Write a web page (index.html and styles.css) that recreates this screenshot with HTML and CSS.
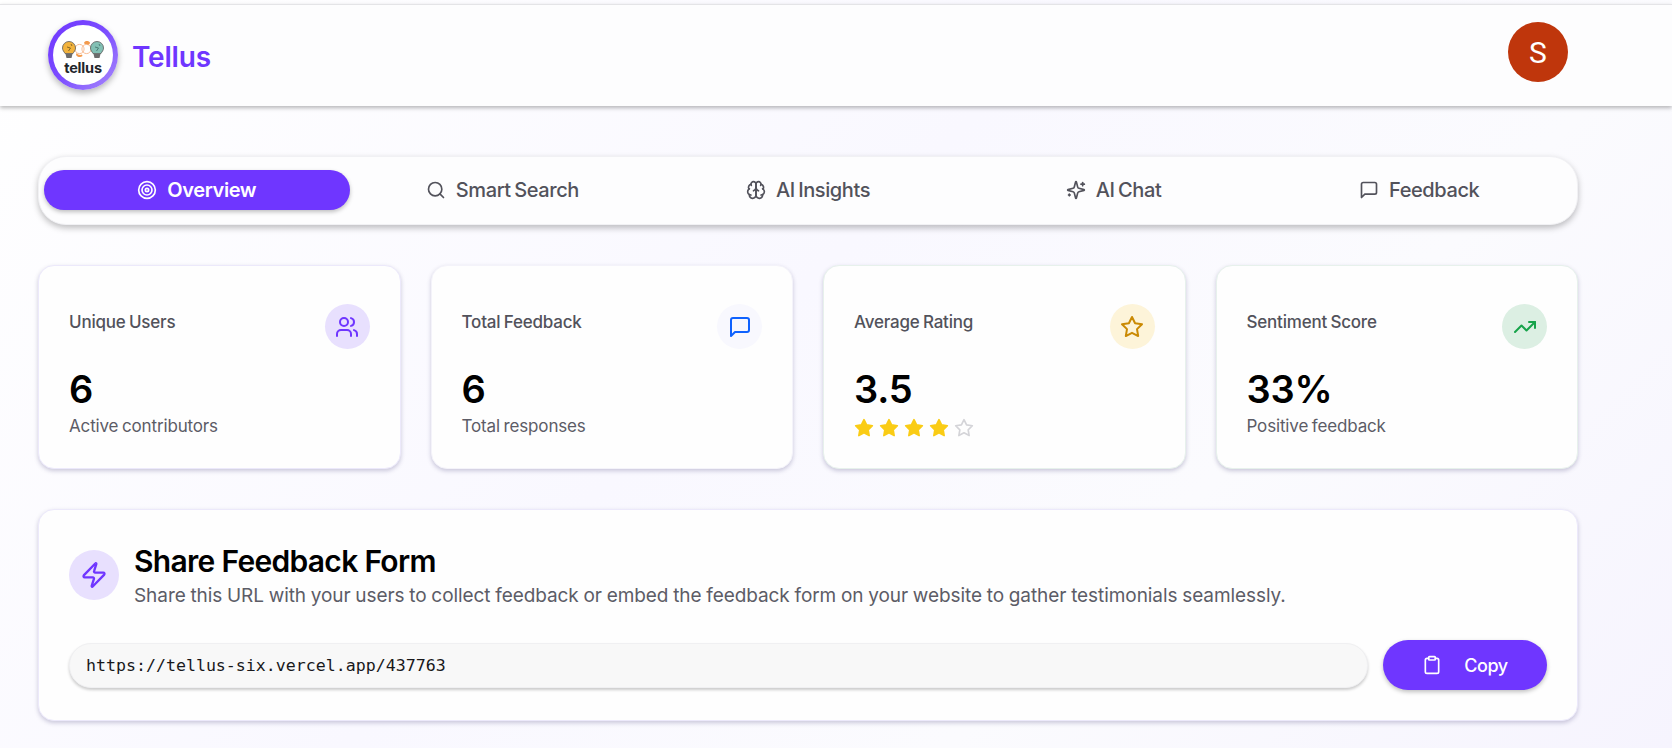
FILE: index.html
```html
<!DOCTYPE html>
<html lang="en">
<head>
<meta charset="utf-8">
<title>Tellus</title>
<link rel="stylesheet" href="styles.css">
</head>
<body>
<header class="topbar">
  <div class="brand">
    <div class="logo">
      <div class="logo-inner">
        <svg class="logo-art" viewBox="0 0 44 20" fill="none">
          <circle cx="18.5" cy="9" r="4.6" stroke="#f6b58a" stroke-width=".9"/>
          <circle cx="25.5" cy="9" r="4.6" stroke="#f6b58a" stroke-width=".9"/>
          <path d="M23 3c1-2.500 4-2.500 6-.5 0 1.500-1 2.500-2.500 2S23.500 4.500 23 3zM15.500 13c1.500 2 4 2.500 5.500 1.500l.5 1.500c-2 2-5.500 1-6.500-1z" fill="#f39a4c"/>
          <path d="M1.500 8a6.500 6.500 0 0 1 13 0c0 2.500-1.500 3.500-2.500 5.500H4C3 11.500 1.500 10.500 1.500 8z" fill="#f2b33d" stroke="#5a5a5a" stroke-width=".8"/>
          <path d="M4.500 14h7l-1 4h-5z" fill="#6c6c6c"/>
          <path d="M6 7l3.500 1-2 3M10 4l1 2" stroke="#6b5320" stroke-width=".8"/>
          <path d="M29.500 8a6.500 6.500 0 0 1 13 0c0 2.500-1.500 3.500-2.500 5.500h-8c-1-2-2.500-3-2.500-5.500z" fill="#82c0b4" stroke="#5a5a5a" stroke-width=".8"/>
          <path d="M32.500 14h7l-1 4h-5z" fill="#6c6c6c"/>
          <path d="M34 7l3.500 1-2 3M38 4l1 2" stroke="#3f6f67" stroke-width=".8"/>
        </svg>
        <span class="logo-word">tellus</span>
      </div>
    </div>
    <span class="brand-name">Tellus</span>
  </div>
  <div class="avatar">S</div>
</header>

<main class="page">
  <nav class="tabs">
    <a class="tab tab-active">
      <svg class="ico" viewBox="0 0 24 24"><circle cx="12" cy="12" r="10"/><circle cx="12" cy="12" r="6"/><circle cx="12" cy="12" r="2"/></svg>
      <span>Overview</span>
    </a>
    <a class="tab">
      <svg class="ico" viewBox="0 0 24 24"><circle cx="11" cy="11" r="8"/><path d="m21 21-4.300-4.300"/></svg>
      <span>Smart Search</span>
    </a>
    <a class="tab">
      <svg class="ico" viewBox="0 0 24 24"><path d="M12 5a3 3 0 1 0-5.997.125 4 4 0 0 0-2.526 5.770 4 4 0 0 0 .556 6.588A4 4 0 1 0 12 18Z"/><path d="M12 5a3 3 0 1 1 5.997.125 4 4 0 0 1 2.526 5.770 4 4 0 0 1-.556 6.588A4 4 0 1 1 12 18Z"/><path d="M15 13a4.500 4.500 0 0 1-3-4 4.500 4.500 0 0 1-3 4"/><path d="M17.599 6.500a3 3 0 0 0 .399-1.375"/><path d="M6.003 5.125A3 3 0 0 0 6.401 6.500"/><path d="M3.477 10.896a4 4 0 0 1 .585-.396"/><path d="M19.938 10.500a4 4 0 0 1 .585.396"/><path d="M6 18a4 4 0 0 1-1.967-.516"/><path d="M19.967 17.484A4 4 0 0 1 18 18"/></svg>
      <span>AI Insights</span>
    </a>
    <a class="tab">
      <svg class="ico" viewBox="0 0 24 24"><path d="M9.937 15.500A2 2 0 0 0 8.500 14.063l-6.135-1.582a.5.5 0 0 1 0-.962L8.500 9.936A2 2 0 0 0 9.937 8.500l1.582-6.135a.5.5 0 0 1 .963 0L14.063 8.500A2 2 0 0 0 15.500 9.937l6.135 1.581a.5.5 0 0 1 0 .964L15.500 14.063a2 2 0 0 0-1.437 1.437l-1.582 6.135a.5.5 0 0 1-.963 0z"/><path d="M20 3v4"/><path d="M22 5h-4"/><path d="M4 17v2"/><path d="M5 18H3"/></svg>
      <span>AI Chat</span>
    </a>
    <a class="tab">
      <svg class="ico" viewBox="0 0 24 24"><path d="M21 15a2 2 0 0 1-2 2H7l-4 4V5a2 2 0 0 1 2-2h14a2 2 0 0 1 2 2z"/></svg>
      <span>Feedback</span>
    </a>
  </nav>

  <section class="stats">
    <article class="card card-purple">
      <div class="card-head">
        <span class="card-title">Unique Users</span>
        <span class="badge badge-purple"><svg class="ico ico-badge" viewBox="0 0 24 24"><path d="M16 21v-2a4 4 0 0 0-4-4H6a4 4 0 0 0-4 4v2"/><circle cx="9" cy="7" r="4"/><path d="M22 21v-2a4 4 0 0 0-3-3.870"/><path d="M16 3.130a4 4 0 0 1 0 7.750"/></svg></span>
      </div>
      <div class="card-value">6</div>
      <div class="card-sub">Active contributors</div>
    </article>
    <article class="card card-blue">
      <div class="card-head">
        <span class="card-title">Total Feedback</span>
        <span class="badge badge-blue"><svg class="ico ico-badge" viewBox="0 0 24 24"><path d="M21 15a2 2 0 0 1-2 2H7l-4 4V5a2 2 0 0 1 2-2h14a2 2 0 0 1 2 2z"/></svg></span>
      </div>
      <div class="card-value">6</div>
      <div class="card-sub">Total responses</div>
    </article>
    <article class="card card-green">
      <div class="card-head">
        <span class="card-title">Average Rating</span>
        <span class="badge badge-amber"><svg class="ico ico-badge" viewBox="0 0 24 24"><polygon points="12 2 15.090 8.260 22 9.270 17 14.140 18.180 21.020 12 17.770 5.820 21.020 7 14.140 2 9.270 8.910 8.260 12 2"/></svg></span>
      </div>
      <div class="card-value">3.5</div>
      <div class="stars">
        <svg class="star star-on" viewBox="0 0 24 24"><polygon points="12 2 15.090 8.260 22 9.270 17 14.140 18.180 21.020 12 17.770 5.820 21.020 7 14.140 2 9.270 8.910 8.260 12 2"/></svg>
        <svg class="star star-on" viewBox="0 0 24 24"><polygon points="12 2 15.090 8.260 22 9.270 17 14.140 18.180 21.020 12 17.770 5.820 21.020 7 14.140 2 9.270 8.910 8.260 12 2"/></svg>
        <svg class="star star-on" viewBox="0 0 24 24"><polygon points="12 2 15.090 8.260 22 9.270 17 14.140 18.180 21.020 12 17.770 5.820 21.020 7 14.140 2 9.270 8.910 8.260 12 2"/></svg>
        <svg class="star star-on" viewBox="0 0 24 24"><polygon points="12 2 15.090 8.260 22 9.270 17 14.140 18.180 21.020 12 17.770 5.820 21.020 7 14.140 2 9.270 8.910 8.260 12 2"/></svg>
        <svg class="star star-off" viewBox="0 0 24 24"><polygon points="12 2 15.090 8.260 22 9.270 17 14.140 18.180 21.020 12 17.770 5.820 21.020 7 14.140 2 9.270 8.910 8.260 12 2"/></svg>
      </div>
    </article>
    <article class="card card-green">
      <div class="card-head">
        <span class="card-title">Sentiment Score</span>
        <span class="badge badge-green"><svg class="ico ico-badge" viewBox="0 0 24 24"><polyline points="22 7 13.500 15.500 8.500 10.500 2 17"/><polyline points="16 7 22 7 22 13"/></svg></span>
      </div>
      <div class="card-value">33%</div>
      <div class="card-sub">Positive feedback</div>
    </article>
  </section>

  <section class="share">
    <div class="share-head">
      <span class="share-badge"><svg class="ico ico-zap" viewBox="0 0 24 24"><path d="M4 14a1 1 0 0 1-.78-1.630l9.900-10.200a.5.5 0 0 1 .86.46l-1.920 6.020A1 1 0 0 0 13 10h7a1 1 0 0 1 .78 1.630l-9.900 10.200a.5.5 0 0 1-.86-.46l1.920-6.020A1 1 0 0 0 11 14z"/></svg></span>
      <div class="share-text">
        <h2 class="share-title">Share Feedback Form</h2>
        <p class="share-desc">Share this URL with your users to collect feedback or embed the feedback form on your website to gather testimonials seamlessly.</p>
      </div>
    </div>
    <div class="share-row">
      <div class="url-box">https://tellus-six.vercel.app/437763</div>
      <button class="copy-btn">
        <svg class="ico" viewBox="0 0 24 24"><rect x="8" y="2" width="8" height="4" rx="1"/><path d="M16 4h2a2 2 0 0 1 2 2v14a2 2 0 0 1-2 2H6a2 2 0 0 1-2-2V6a2 2 0 0 1 2-2h2"/></svg>
        <span>Copy</span>
      </button>
    </div>
  </section>
</main>
</body>
</html>
```

FILE: styles.css
```css
* { box-sizing: border-box; }
html, body { height: 100%; }
body {
  margin: 0;
  padding-top: 4px;
  overflow: hidden;
  font-family: "Inter", "Open Sans", sans-serif;
  color: #000;
  background: linear-gradient(135deg, #ffffff 0%, #f9f8ff 45%, #fbfbfe 70%, #f6f4fe 100%);
}
.ico {
  width: 20px;
  height: 20px;
  flex: none;
  fill: none;
  stroke: currentColor;
  stroke-width: 2;
  stroke-linecap: round;
  stroke-linejoin: round;
}

.topbar {
  height: 102px;
  padding: 0 104px 0 48px;
  display: flex;
  align-items: center;
  justify-content: space-between;
  border-top: 1px solid #e4e4e7;
  background: #fdfdfe;
  box-shadow: 0 2px 4px rgba(0, 0, 0, 0.28);
}
.brand { display: flex; align-items: center; gap: 14px; margin-bottom: 1px; }
.logo {
  width: 70px;
  height: 70px;
  padding: 5px;
  border-radius: 50%;
  background: linear-gradient(135deg, #6f36ff 0%, #7c4dff 50%, #a98bfb 100%);
  box-shadow: 0 3px 6px rgba(0, 0, 0, 0.28);
}
.logo-inner {
  width: 60px;
  height: 60px;
  border-radius: 50%;
  background: #fff;
  display: flex;
  flex-direction: column;
  align-items: center;
  justify-content: flex-start;
  padding-top: 15px;
}
.logo-art { width: 44px; height: 20px; flex: none; }
.logo-word {
  font-size: 14.5px;
  line-height: 15px;
  font-weight: 700;
  letter-spacing: -0.2px;
  color: #22262b;
}
.brand-name {
  margin-top: 3px;
  font-size: 28px;
  font-weight: 600;
  letter-spacing: -0.2px;
  color: #6f36ff;
}
.avatar {
  width: 60px;
  height: 60px;
  margin-bottom: 7px;
  border-radius: 50%;
  background: #bf360c;
  color: #fff;
  font-family: "Roboto", sans-serif;
  font-size: 30px;
  display: flex;
  align-items: center;
  justify-content: center;
}

.page { padding: 50px 94px 0 38px; }

.tabs {
  height: 69px;
  padding: 13px 5px 14px;
  display: grid;
  grid-template-columns: repeat(5, 1fr);
  border-radius: 28px;
  background: #fdfdfe;
  border: 1px solid #f1f1f4;
  box-shadow: 0 3px 6px rgba(0, 0, 0, 0.25);
}
.tab {
  display: flex;
  align-items: center;
  justify-content: center;
  gap: 10px;
  border-radius: 20px;
  font-size: 20px;
  font-weight: 500;
  letter-spacing: -0.4px;
  word-spacing: -1.5px;
  color: #52525b;
}
.tab-active {
  background: #6f36ff;
  color: #fff;
  font-weight: 600;
  box-shadow: 0 2px 4px rgba(0, 0, 0, 0.25);
}

.stats {
  margin-top: 40px;
  display: grid;
  grid-template-columns: repeat(4, 1fr);
  gap: 30px;
}
.card {
  height: 204px;
  padding: 38px 30px 0;
  border-radius: 16px;
  background: #fefefe;
  border: 1px solid #ece9fb;
  box-shadow: 0 2px 4px rgba(60, 50, 110, 0.25);
}
.card-blue { border-color: #f4f3fa; }
.card-green { border-color: #e7f1ec; }
.card-head {
  display: flex;
  justify-content: space-between;
  align-items: flex-start;
  height: 45px;
}
.card-title {
  margin-top: 6px;
  font-size: 17px;
  line-height: 24px;
  font-weight: 500;
  letter-spacing: -0.2px;
  word-spacing: -1px;
  color: #52525b;
}
.badge {
  width: 45px;
  height: 45px;
  border-radius: 50%;
  display: flex;
  align-items: center;
  justify-content: center;
}
.ico-badge { width: 24px; height: 24px; }
.badge-purple { background: #e8e0fe; color: #6f36ff; }
.badge-blue { background: #f8f8fe; color: #0f62fe; }
.badge-amber { background: #fdf4d9; color: #ca8a04; }
.badge-green { background: #dcefe3; color: #16a34a; }
.card-value {
  margin-top: 18px;
  font-size: 38px;
  line-height: 44px;
  font-weight: 600;
  letter-spacing: -0.2px;
}
.card-sub {
  margin-top: 3px;
  font-size: 17px;
  line-height: 24px;
  letter-spacing: -0.15px;
  word-spacing: -1px;
  color: #5c5c66;
}
.stars { display: flex; gap: 5px; margin-top: 7px; }
.star { width: 20px; height: 20px; stroke-width: 2; stroke-linejoin: round; }
.star-on { fill: #facc15; stroke: #facc15; }
.star-off { fill: none; stroke: #d4d4d8; }

.share {
  margin-top: 40px;
  height: 212px;
  padding: 33px 30px 0;
  border-radius: 16px;
  background: #fefefe;
  border: 1px solid #ece9fb;
  box-shadow: 0 2px 4px rgba(60, 50, 110, 0.25);
}
.share-head { display: flex; align-items: flex-start; gap: 15px; }
.share-badge {
  width: 50px;
  height: 50px;
  margin-top: 7px;
  flex: none;
  border-radius: 50%;
  background: #e8e0fe;
  color: #6f36ff;
  display: flex;
  align-items: center;
  justify-content: center;
}
.ico-zap { width: 28px; height: 28px; }
.share-title {
  margin: 0;
  font-size: 30px;
  line-height: 36px;
  font-weight: 600;
  letter-spacing: -0.7px;
}
.share-desc {
  margin: 3px 0 0;
  font-size: 19px;
  line-height: 28px;
  letter-spacing: -0.07px;
  word-spacing: -0.5px;
  color: #5c5c66;
}
.share-row {
  margin-top: 30px;
  display: flex;
  align-items: center;
  gap: 15px;
}
.url-box {
  flex: 1;
  height: 45px;
  padding: 0 16px;
  display: flex;
  align-items: center;
  border-radius: 22px;
  background: #f8f8f8;
  border: 1px solid #f0f0f2;
  box-shadow: 0 2px 3px rgba(0, 0, 0, 0.2);
  font-family: "DejaVu Sans Mono", monospace;
  font-size: 16.6px;
  color: #18181b;
}
.copy-btn {
  width: 164px;
  height: 50px;
  border: 0;
  border-radius: 25px;
  background: #6f36ff;
  color: #fff;
  display: flex;
  align-items: center;
  justify-content: center;
  gap: 22px;
  font-family: inherit;
  font-size: 18px;
  font-weight: 500;
  letter-spacing: -0.4px;
  box-shadow: 0 2px 4px rgba(0, 0, 0, 0.25);
}
```
